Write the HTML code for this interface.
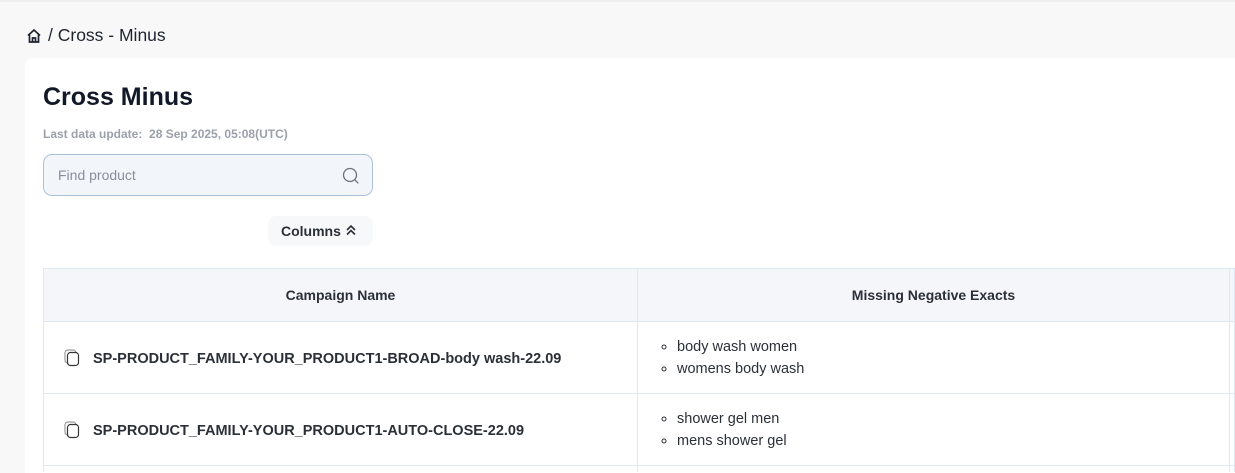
<!DOCTYPE html>
<html><head><style>
*{box-sizing:border-box;margin:0;padding:0}
html,body{width:1235px;height:473px;overflow:hidden}
body{background:#f8f8f9;font-family:"Liberation Sans",sans-serif;position:relative}
.top{position:absolute;left:0;top:0;width:1235px;height:2px;background:#efeff1}
.bc{position:absolute;left:26px;top:25px;font-size:17.5px;color:#1f2330;display:flex;align-items:center;gap:6px}
.card{position:absolute;left:25px;top:58px;width:1210px;height:415px;background:#fff;border-radius:8px 0 0 0}
h1{position:absolute;left:43px;top:83px;font-size:25px;font-weight:bold;color:#111827}
.upd{position:absolute;left:43px;top:127px;font-size:12px;font-weight:bold;color:#9ca0aa}
.search{position:absolute;left:43px;top:154px;width:330px;height:42px;border:1px solid #a9c1d8;border-radius:9px;background:#f2f6fb;font-size:14px;color:#8a8e98;padding:12px 14px}
.cols{position:absolute;left:268px;top:216px;width:105px;height:30px;background:#f7f8f9;border-radius:8px;font-size:14px;font-weight:bold;color:#2b2f38;padding:7px 13px}
table{position:absolute;left:43px;top:268px;border-collapse:collapse;width:1192px}
td,th{border:1px solid #dde8f4;font-size:14px;color:#2b2f38}
th{background:#f4f6fa;height:53px;font-weight:bold}
td{height:72px;vertical-align:middle}
td.c{font-weight:bold;padding-left:20px;font-size:14.5px}
ul{padding-left:39px;list-style:circle;line-height:22px;font-size:14.5px}
.ic{display:inline-block;width:16px;height:18px;vertical-align:-4px;margin-right:13px}
</style></head><body>
<div class="top"></div>
<div class="bc"><svg width="16" height="16" viewBox="0 0 16 16" fill="none" stroke="#1f2330" stroke-width="1.7"><path d="M2 7.5L8 2l6 5.5M3.5 6.5V14h9V6.5M6.5 14v-4h3v4"/></svg><span>/ Cross - Minus</span></div>
<div class="card"></div>
<h1>Cross Minus</h1>
<div class="upd">Last data update:&nbsp; 28 Sep 2025, 05:08(UTC)</div>
<div class="search">Find product<svg style="position:absolute;right:12px;top:12px" width="18" height="18" viewBox="0 0 18 18" fill="none" stroke="#6b7280" stroke-width="1.3"><circle cx="8" cy="8" r="6.5"/><path d="M12.8 12.8l3.5 3.5"/></svg></div>
<div class="cols">Columns <svg width="12" height="12" viewBox="0 0 12 12" fill="none" stroke="#2b2f38" stroke-width="1.6" style="vertical-align:0"><path d="M2 6l4-4 4 4M2 10.5l4-4 4 4"/></svg></div>
<table>
<tr><th style="width:594px">Campaign Name</th><th style="width:592px">Missing Negative Exacts</th><th></th></tr>
<tr><td class="c"><svg class="ic" viewBox="0 0 16 18" fill="none" stroke="#333" stroke-width="1.2"><rect x="1" y="1" width="11" height="13" rx="3" stroke="#999"/><rect x="3.5" y="3.5" width="11" height="13" rx="3" fill="#fff"/></svg>SP-PRODUCT_FAMILY-YOUR_PRODUCT1-BROAD-body wash-22.09</td><td><ul><li>body wash women</li><li>womens body wash</li></ul></td><td></td></tr>
<tr><td class="c"><svg class="ic" viewBox="0 0 16 18" fill="none" stroke="#333" stroke-width="1.2"><rect x="1" y="1" width="11" height="13" rx="3" stroke="#999"/><rect x="3.5" y="3.5" width="11" height="13" rx="3" fill="#fff"/></svg>SP-PRODUCT_FAMILY-YOUR_PRODUCT1-AUTO-CLOSE-22.09</td><td><ul><li>shower gel men</li><li>mens shower gel</li></ul></td><td></td></tr>
<tr><td style="height:6px;border-bottom:none"></td><td style="height:6px;border-bottom:none"></td><td style="height:6px;border-bottom:none"></td></tr>
</table>
</body></html>
